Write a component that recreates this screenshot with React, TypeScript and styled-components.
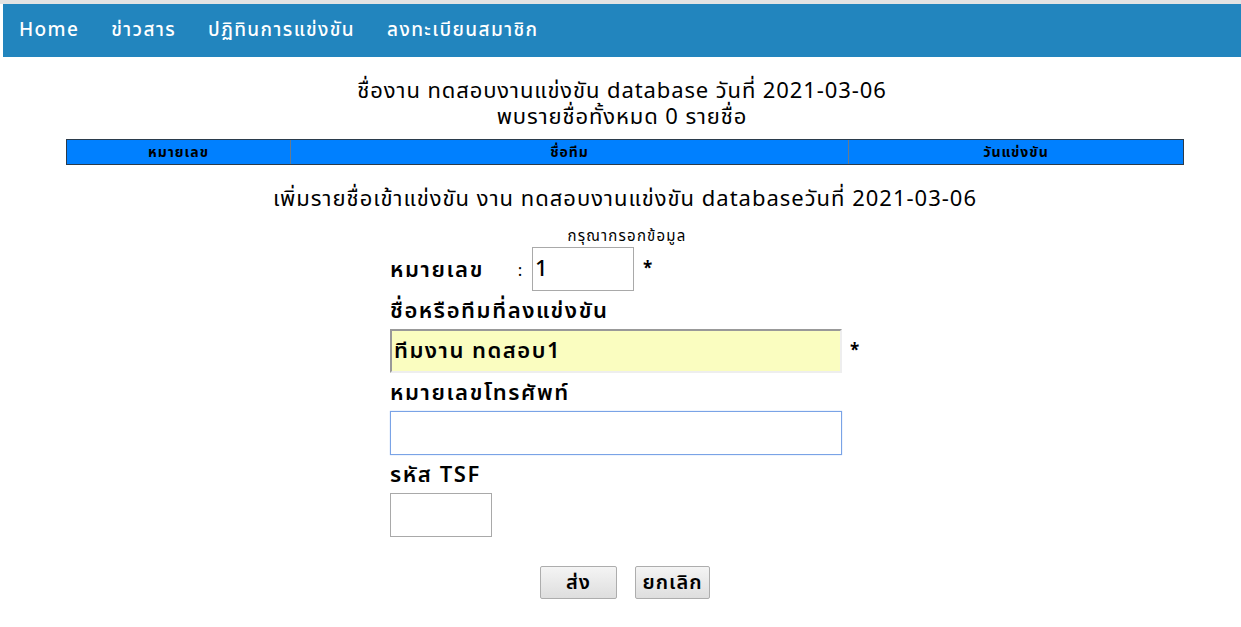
import React from "react";
import styled, { createGlobalStyle } from "styled-components";

const Global = createGlobalStyle`
  html, body { margin: 0; padding: 0; background: #fff; }
  body { font-family: "Noto Sans Thai", "Noto Sans", "Liberation Sans", sans-serif; color: #000; }
`;

const TopLine = styled.div`
  height: 4px;
  background: #e3e3e3;
`;

const Page = styled.div`
  padding-left: 3px;
`;

const Nav = styled.nav`
  height: 53px;
  background: #2285be;
  display: flex;
  align-items: center;
  gap: 32px;
  padding-left: 16px;
`;

const NavLink = styled.a`
  color: #fff;
  font-size: 19px;
  font-weight: 500;
  letter-spacing: 1.4px;
  text-decoration: none;
`;

const Title = styled.div`
  text-align: center;
  font-size: 22px;
  letter-spacing: 0.9px;
  line-height: 26px;
  margin-top: 22px;
`;

const Table = styled.div`
  margin: 8px 57px 0 63px;
  display: grid;
  grid-template-columns: 224px 558px 1fr;
  background: #0080ff;
  border: 1px solid #2b3b4b;
  height: 26px;
  box-sizing: border-box;
`;

const Th = styled.div<{ $last?: boolean }>`
  font-size: 14px;
  font-weight: 700;
  letter-spacing: 1px;
  display: flex;
  align-items: center;
  justify-content: center;
  border-right: ${(p) => (p.$last ? "none" : "1px solid #6a7a8a")};
`;

const Heading = styled.div`
  text-align: center;
  font-size: 22px;
  letter-spacing: 1px;
  margin-top: 21px;
  line-height: 28px;
  padding-left: 6px;
`;

const Hint = styled.div`
  text-align: center;
  font-size: 15px;
  letter-spacing: 1.2px;
  margin-top: 13px;
  padding-left: 10px;
  line-height: 20px;
`;

const Form = styled.form`
  margin-left: 387px;
  display: flex;
  flex-direction: column;
`;

const Row = styled.div<{ $mt?: number }>`
  display: flex;
  align-items: center;
  margin-top: ${(p) => p.$mt ?? 0}px;
`;

const Label = styled.label<{ $mt?: number }>`
  font-size: 22px;
  font-weight: 600;
  letter-spacing: 1.6px;
  line-height: 26px;
  display: block;
  margin-top: ${(p) => p.$mt ?? 0}px;
`;

const NumLabel = styled(Label)`
  width: 142px;
  display: flex;
  align-items: center;
  padding-right: 8px;
  box-sizing: border-box;
  margin-top: 3px;
`;

const LabelText = styled.span`
  flex: 1;
`;

const Colon = styled.span`
  font-weight: 400;
  font-size: 17px;
`;

const Input = styled.input<{ $w: number; $variant?: "yellow" | "focus" }>`
  width: ${(p) => p.$w}px;
  height: 44px;
  box-sizing: border-box;
  font-family: inherit;
  font-size: 22px;
  font-weight: 500;
  letter-spacing: 1px;
  padding: 0 2px;
  outline: none;
  border: 1px solid #a9a9a9;
  background: #fff;
  color: #000;
  ${(p) =>
    p.$variant === "yellow"
      ? `background: #fafdc0; border: 2px solid; border-color: #999 #eee #eee #999; font-weight: 600; letter-spacing: 1.5px;`
      : ""}
  ${(p) => (p.$variant === "focus" ? `border: 1px solid #7aa3e6; box-shadow: 0 0 1px #9cbcf0;` : "")}
`;

const Star = styled.span<{ $ml: number }>`
  font-weight: 700;
  font-size: 17px;
  margin-left: ${(p) => p.$ml}px;
`;

const Buttons = styled.div`
  display: flex;
  justify-content: center;
  gap: 18px;
  margin-top: 29px;
  padding-left: 6px;
`;

const Button = styled.button<{ $w: number }>`
  height: 33px;
  width: ${(p) => p.$w}px;
  padding: 0;
  font-family: inherit;
  font-size: 20px;
  font-weight: 600;
  letter-spacing: 1px;
  border: 1px solid #adadad;
  border-radius: 2px;
  background: linear-gradient(#f4f4f4, #dedede);
  color: #000;
`;

export default function App() {
  return (
    <>
      <Global />
      <TopLine />
      <Page>
        <Nav>
          <NavLink href="#">Home</NavLink>
          <NavLink href="#">ข่าวสาร</NavLink>
          <NavLink href="#">ปฏิทินการแข่งขัน</NavLink>
          <NavLink href="#">ลงทะเบียนสมาชิก</NavLink>
        </Nav>
        <Title>
          ชื่องาน ทดสอบงานแข่งขัน database วันที่ 2021-03-06
          <br />
          พบรายชื่อทั้งหมด 0 รายชื่อ
        </Title>
        <Table>
          <Th>หมายเลข</Th>
          <Th>ชื่อทีม</Th>
          <Th $last>วันแข่งขัน</Th>
        </Table>
        <Heading>เพิ่มรายชื่อเข้าแข่งขัน งาน ทดสอบงานแข่งขัน databaseวันที่ 2021-03-06</Heading>
        <Hint>กรุณากรอกข้อมูล</Hint>
        <Form>
          <Row>
            <NumLabel>
              <LabelText>หมายเลข</LabelText>
              <Colon>:</Colon>
            </NumLabel>
            <Input $w={102} defaultValue="1" />
            <Star $ml={9}>*</Star>
          </Row>
          <Label $mt={8}>ชื่อหรือทีมที่ลงแข่งขัน</Label>
          <Row $mt={4}>
            <Input $w={452} $variant="yellow" defaultValue="ทีมงาน ทดสอบ1" />
            <Star $ml={8}>*</Star>
          </Row>
          <Label $mt={8}>หมายเลขโทรศัพท์</Label>
          <Row $mt={4}>
            <Input $w={452} $variant="focus" autoFocus />
          </Row>
          <Label $mt={8}>รหัส TSF</Label>
          <Row $mt={4}>
            <Input $w={102} />
          </Row>
        </Form>
        <Buttons>
          <Button type="button" $w={77}>ส่ง</Button>
          <Button type="button" $w={75}>ยกเลิก</Button>
        </Buttons>
      </Page>
    </>
  );
}
